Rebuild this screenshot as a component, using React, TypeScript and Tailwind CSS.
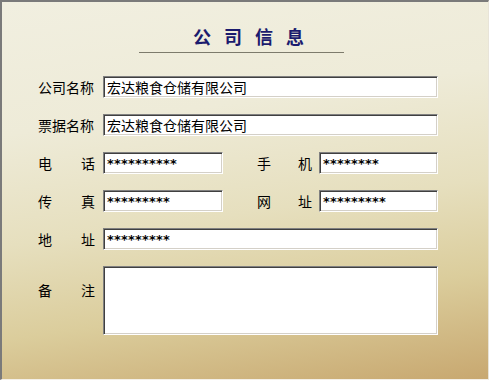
import clsx from "clsx";

// Classic Win32-style sunken edit box
const editBox =
  "h-[22px] bg-white border-t border-l border-b border-r border-t-[#808080] border-l-[#808080] border-b-white border-r-white shadow-[inset_1px_1px_0_#404040,inset_-1px_-1px_0_#d4d0c8] pl-[3px] flex items-center text-black overflow-hidden";

const cjk = "font-['Noto_Sans_CJK_SC','Noto_Sans_CJK_JP',sans-serif]";
const stars = "font-['DejaVu_Sans',sans-serif] text-[13px] font-bold tracking-[0.2px] leading-none";

function Label2({ a, b, className }: { a: string; b: string; className?: string }) {
  return (
    <div className={clsx("flex justify-between text-[14px] leading-none", className)}>
      <span>{a}</span>
      <span>{b}</span>
    </div>
  );
}

function Field({ value, masked, className }: { value: string; masked?: boolean; className?: string }) {
  return (
    <div className={clsx(editBox, className)}>
      <span className={masked ? stars : "text-[14px] leading-none"}>{value}</span>
    </div>
  );
}

export default function App() {
  return (
    <div
      className={clsx(
        "w-[489px] h-[380px] overflow-hidden border-t-2 border-l-2 border-r border-b border-t-[#7a7a7a] border-l-[#7a7a7a] border-r-[#e8e4d8] border-b-[#f4f0e8] bg-[linear-gradient(172deg,#f1efe0_0%,#eeebd8_30%,#e6dfbe_55%,#dbcd9c_76%,#c8a870_100%)] text-black",
        cjk
      )}
    >
      {/* Title */}
      <div className="mt-[22px] h-[24px] flex justify-center gap-[13px] pl-[7px] text-[18px] leading-[24px] font-bold text-[#1b1b6e]">
        <span>公</span>
        <span>司</span>
        <span>信</span>
        <span>息</span>
      </div>
      <div className="mt-[4px] ml-[137px] w-[205px] h-px bg-[#7d7b6c]" />

      {/* Form */}
      <div className="mt-[23px] ml-[36px] flex flex-col gap-[16px]">
        <div className="flex items-center">
          <div className="w-[65px] text-[14px] leading-none">公司名称</div>
          <Field value="宏达粮食仓储有限公司" className="w-[335px]" />
        </div>
        <div className="flex items-center">
          <div className="w-[65px] text-[14px] leading-none">票据名称</div>
          <Field value="宏达粮食仓储有限公司" className="w-[335px]" />
        </div>
        <div className="flex items-center">
          <Label2 a="电" b="话" className="w-[57px] mr-[8px]" />
          <Field value="**********" masked className="w-[120px]" />
          <Label2 a="手" b="机" className="ml-[34px] w-[55px] mr-[7px]" />
          <Field value="********" masked className="w-[119px]" />
        </div>
        <div className="flex items-center">
          <Label2 a="传" b="真" className="w-[57px] mr-[8px]" />
          <Field value="*********" masked className="w-[120px]" />
          <Label2 a="网" b="址" className="ml-[34px] w-[55px] mr-[7px]" />
          <Field value="*********" masked className="w-[119px]" />
        </div>
        <div className="flex items-center">
          <Label2 a="地" b="址" className="w-[57px] mr-[8px]" />
          <Field value="*********" masked className="w-[335px]" />
        </div>
        <div className="flex items-start">
          <Label2 a="备" b="注" className="w-[57px] mr-[8px] mt-[17px]" />
          <div className={clsx(editBox, "h-[69px] w-[335px]")} />
        </div>
      </div>
    </div>
  );
}
